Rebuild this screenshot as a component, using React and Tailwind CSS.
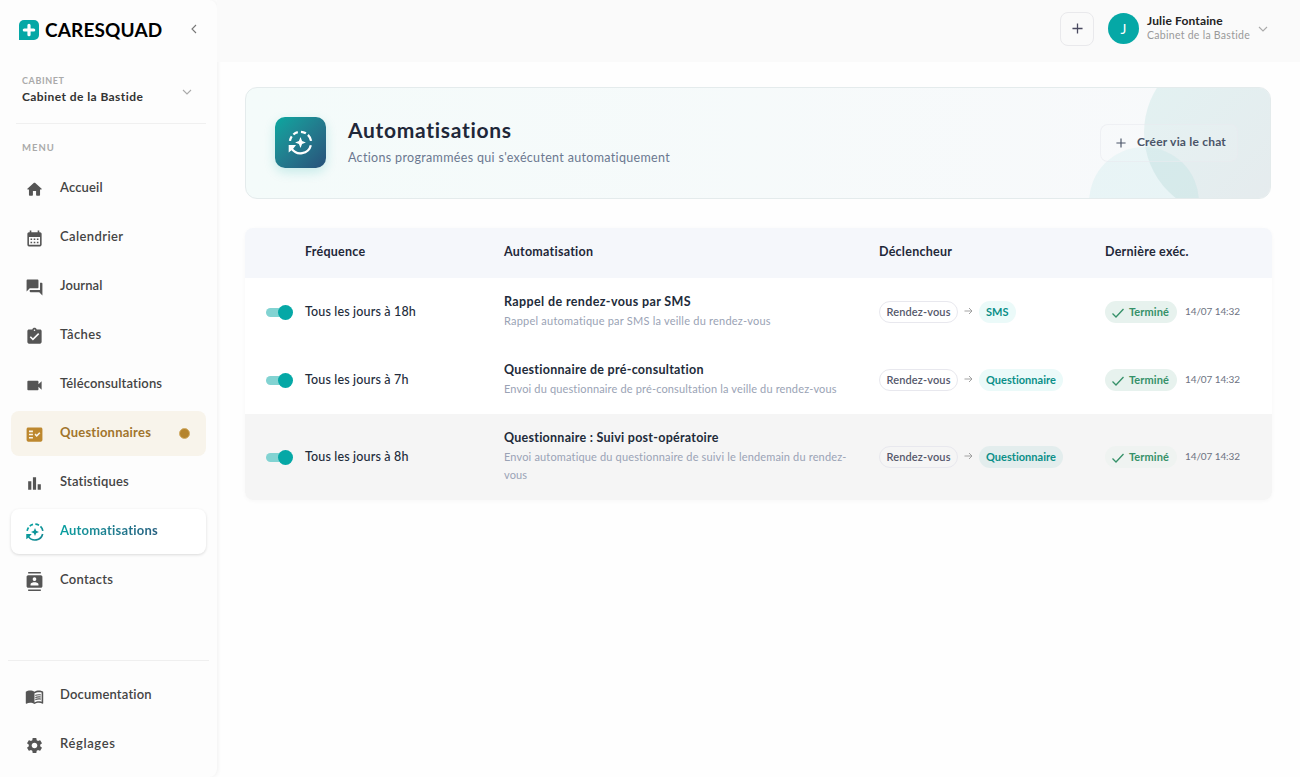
import React from 'react';
import {
  MdCalendarMonth,
  MdQuestionAnswer,
  MdAssignmentTurnedIn,
  MdVideocam,
  MdFactCheck,
  MdBarChart,
  MdContacts,
  MdMenuBook,
  MdSettings,
} from 'react-icons/md';

const HomeIcon = ({ size = 19 }) => (
  <svg width={size} height={size} viewBox="0 0 24 24" fill="currentColor">
    <path d="M10 19v-5h4v5c0 .55.45 1 1 1h3c.55 0 1-.45 1-1v-7h1.7c.46 0 .68-.57.33-.87L12.67 3.6c-.38-.34-.96-.34-1.34 0l-8.36 7.53c-.34.3-.13.87.33.87H5v7c0 .55.45 1 1 1h3c.55 0 1-.45 1-1z" />
  </svg>
);

const AutoIcon = ({ size = 20, stroke = 'currentColor' }) => (
  <svg width={size} height={size} viewBox="0 0 24 24" fill="none">
    <defs>
      <linearGradient id="teal" gradientUnits="userSpaceOnUse" x1="0" y1="0" x2="24" y2="24">
        <stop offset="0" stopColor="#05aaa5" />
        <stop offset="1" stopColor="#17808d" />
      </linearGradient>
    </defs>
    <g stroke={stroke} strokeWidth="2">
      <path d="M21.2 14.4A9.5 9.5 0 0 1 4 17.2" />
      <path d="M2.6 10.6A9.5 9.5 0 0 1 4.2 6.6" />
      <path d="M5.7 4.9A9.5 9.5 0 0 1 9.6 2.8" />
      <path d="M12.4 2.5A9.5 9.5 0 0 1 16.8 3.8" />
      <path d="M18.6 5.2A9.5 9.5 0 0 1 21.4 10.6" />
    </g>
    <path d="M1.5 14.3H8l-2 2.5-2 2L1.5 20.8z" fill={stroke} />
    <path d="M12 7.2l1.4 3.4 3.4 1.4-3.4 1.4L12 16.8l-1.4-3.4L7.2 12l3.4-1.4z" fill={stroke} />
  </svg>
);

const Chevron = ({ className, d = 'M2 4l4 4 4-4' }) => (
  <svg width="12" height="12" viewBox="0 0 12 12" fill="none" stroke="currentColor" className={className}>
    <path d={d} strokeWidth="1.1" />
  </svg>
);

const Plus = ({ size = 12 }) => (
  <svg width={size} height={size} viewBox="0 0 12 12" stroke="currentColor" strokeWidth="1.4">
    <path d="M6 0.5v11M0.5 6h11" />
  </svg>
);

const menu = [
  { label: 'Accueil', icon: HomeIcon, tracking: 'tracking-[0.15px]' },
  { label: 'Calendrier', icon: MdCalendarMonth, tracking: 'tracking-[0.4px]' },
  { label: 'Journal', icon: MdQuestionAnswer, tracking: 'tracking-[0.1px]' },
  { label: 'Tâches', icon: MdAssignmentTurnedIn, tracking: 'tracking-[0.4px]' },
  { label: 'Téléconsultations', icon: MdVideocam, tracking: 'tracking-[0.15px]' },
  { label: 'Questionnaires', icon: MdFactCheck, tracking: 'tracking-[0.23px]', highlight: true },
  { label: 'Statistiques', icon: MdBarChart, tracking: 'tracking-[0.17px]' },
  { label: 'Automatisations', icon: AutoIcon, tracking: 'tracking-[0.2px]', active: true },
  { label: 'Contacts', icon: MdContacts, tracking: 'tracking-[0.25px]' },
];

const footerMenu = [
  { label: 'Documentation', icon: MdMenuBook, tracking: 'tracking-[0.17px]' },
  { label: 'Réglages', icon: MdSettings, tracking: 'tracking-[0.62px]' },
];

const rows = [
  {
    freq: 'Tous les jours à 18h',
    title: 'Rappel de rendez-vous par SMS',
    desc: 'Rappel automatique par SMS la veille du rendez-vous',
    action: 'SMS',
    titleTracking: 'tracking-[0.38px]',
    descTracking: 'tracking-[0.22px]',
  },
  {
    freq: 'Tous les jours à 7h',
    title: 'Questionnaire de pré-consultation',
    desc: 'Envoi du questionnaire de pré-consultation la veille du rendez-vous',
    action: 'Questionnaire',
    titleTracking: 'tracking-[0.28px]',
    descTracking: 'tracking-[0.15px]',
  },
  {
    freq: 'Tous les jours à 8h',
    title: 'Questionnaire : Suivi post-opératoire',
    desc: 'Envoi automatique du questionnaire de suivi le lendemain du rendez-vous',
    action: 'Questionnaire',
    titleTracking: 'tracking-[0.26px]',
    descTracking: 'tracking-[0.16px]',
    hovered: true,
  },
];

const NavItem = ({ item }) => {
  const Icon = item.icon;
  let look = 'text-[#444]';
  if (item.highlight) look = 'bg-[#f8f4eb] text-[#a1752c]';
  if (item.active) look = 'bg-white shadow-[0_1px_3px_rgba(0,0,0,0.14)]';
  return (
    <li className={`flex h-[45px] items-center rounded-lg pl-[13px] pr-[16px] ${look}`}>
      <span className={`flex w-[21px] justify-center pt-px ${item.highlight ? 'text-[#bd882f]' : 'text-[#555]'}`}>
        <Icon size={item.active ? 20 : 19} {...(item.active ? { stroke: 'url(#teal)' } : {})} />
      </span>
      <span
        className={`mb-[3px] ml-[15px] whitespace-nowrap text-[13px] leading-5 ${item.tracking} ${
          item.active || item.highlight ? 'font-bold' : 'font-semibold'
        } ${item.active ? 'bg-gradient-to-r from-[#05a0a0] to-[#245f80] bg-clip-text text-transparent' : ''}`}
      >
        {item.label}
      </span>
      {item.highlight && (
        <span className="ml-auto h-[11px] w-[11px] rounded-full border border-[#d3ae68] bg-[#b5842c]" />
      )}
    </li>
  );
};

const Sidebar = () => (
  <aside className="flex h-full w-[217px] shrink-0 flex-col rounded-r-lg bg-[#fdfdfd] shadow-[1px_0_4px_rgba(0,0,0,0.06)]">
    <div className="flex h-[60px] items-center pl-[19px] pr-[17px]">
      <svg width="20" height="20" viewBox="0 0 20 20">
        <path d="M5 0h10a5 5 0 0 1 5 5v10a5 5 0 0 1-5 5H0V5a5 5 0 0 1 5-5z" fill="#05a8a6" />
        <path d="M10 5.3v9.4M5.3 10h9.4" stroke="#fff" strokeWidth="3.2" strokeLinecap="round" />
      </svg>
      <span className="ml-[6px] text-[19px] font-bold leading-6 tracking-[0.15px] text-black">CARESQUAD</span>
      <Chevron d="M8 2L4 6l4 4" className="mb-[3px] ml-auto text-[#777]" />
    </div>
    <div className="ml-4 mr-[11px] flex h-16 items-center border-b border-[#f0f0f0] pl-[6px] pr-[13px]">
      <div className="pb-[3px]">
        <div className="text-[9px] font-bold leading-[14px] tracking-[0.6px] text-[#aaa]">CABINET</div>
        <div className="text-[12px] font-bold leading-[18px] tracking-[0.42px] text-[#333]">Cabinet de la Bastide</div>
      </div>
      <Chevron className="ml-auto text-[#aaa]" />
    </div>
    <div className="mt-4 pl-[22px] text-[9.5px] font-bold leading-4 tracking-[1px] text-[#aaa]">MENU</div>
    <ul className="mt-[10px] flex flex-col gap-[4px] px-[11px]">
      {menu.map((item) => (
        <NavItem key={item.label} item={item} />
      ))}
    </ul>
    <ul className="mx-2 mt-auto flex flex-col gap-[4px] border-t border-[#efefef] px-[3px] pb-[10px] pt-[12px]">
      {footerMenu.map((item) => (
        <NavItem key={item.label} item={item} />
      ))}
    </ul>
  </aside>
);

const Topbar = () => (
  <header className="flex h-[62px] shrink-0 items-center justify-end bg-[#fafafa] pb-[5px] pr-[31px]">
    <button className="flex h-[34px] w-[34px] items-center justify-center rounded-lg border border-[#e9e9ec] text-[#4a4a60]">
      <Plus size={11} />
    </button>
    <div className="ml-[14px] flex h-[31px] w-[31px] items-center justify-center rounded-full bg-[#05a8a6] text-[14px] text-white">
      J
    </div>
    <div className="mb-px ml-2 w-[103px] whitespace-nowrap">
      <div className="text-[12px] font-bold leading-[14px] tracking-[0.15px] text-[#222]">Julie Fontaine</div>
      <div className="text-[10.5px] leading-[14px] tracking-[0.28px] text-[#999]">Cabinet de la Bastide</div>
    </div>
    <Chevron className="ml-[7px] text-[#aaa]" />
  </header>
);

const Hero = () => (
  <section className="relative flex h-[112px] w-[1026px] items-center overflow-hidden rounded-xl border border-[#e4ebec] bg-gradient-to-r from-[#f4fbfa] to-[#f8f9fb] pl-[29px] pr-8">
    <div className="absolute -top-[39px] left-[898px] h-[167px] w-[167px] rounded-full bg-gradient-to-br from-[#e2f2f2] to-[#e6eaed]" />
    <div className="absolute left-[843px] top-[59px] h-[110px] w-[110px] rounded-full bg-[#05a8a6]/6" />
    <div className="mb-px flex h-[51px] w-[51px] items-center justify-center rounded-[10px] bg-gradient-to-br from-[#05a8a0] to-[#27517a] shadow-[0_4px_12px_rgba(5,168,166,0.2)]">
      <AutoIcon size={27} stroke="#fff" />
    </div>
    <div className="mb-[3px] ml-[22px]">
      <h1 className="text-[21px] font-bold leading-7 tracking-[0.7px] text-[#1f2839]">Automatisations</h1>
      <p className="mt-[4px] text-[12.5px] leading-5 tracking-[0.33px] text-[#6b7890]">
        Actions programmées qui s'exécutent automatiquement
      </p>
    </div>
    <button className="relative ml-auto flex h-[38px] w-[138px] items-center rounded-lg border border-[#e8eaee]/60 bg-white/10 pl-[15px] text-[#4a5468]">
      <Plus size={10} />
      <span className="mb-[2px] ml-[11px] whitespace-nowrap text-[12px] font-bold tracking-[0.2px]">Créer via le chat</span>
    </button>
  </section>
);

const Toggle = () => (
  <span className="relative block h-[15px] w-[27px]">
    <span className="absolute left-0 top-[3px] h-[9px] w-[24px] rounded-full bg-[#82d3d2]" />
    <span className="absolute right-0 top-0 h-[15px] w-[15px] rounded-full bg-[#05a8a6]" />
  </span>
);

const Row = ({ row }) => (
  <div
    className={`grid grid-cols-[60px_199px_375px_226px_1fr] items-center ${row.hovered ? 'h-[86px] bg-[#f5f5f5]' : 'h-[68px] bg-white'}`}
  >
    <div className="pl-[21px] pt-px">
      <Toggle />
    </div>
    <div className="text-[12.5px] font-medium tracking-[0.15px] text-[#222b3a]">{row.freq}</div>
    <div className="mb-[2px] pr-7">
      <div className={`text-[12.5px] font-bold leading-5 text-[#222b3a] ${row.titleTracking}`}>{row.title}</div>
      <div className={`text-[11px] leading-[18px] text-[#9aa3b5] ${row.descTracking}`}>{row.desc}</div>
    </div>
    <div className="flex items-center">
      <span className="flex h-[22px] w-[79px] items-center justify-center rounded-full border border-[#e8e8ee] text-[11px] font-semibold tracking-[0.15px] text-[#55586b]">
        Rendez-vous
      </span>
      <svg width="9" height="8" viewBox="0 0 9 8" fill="none" stroke="#999" strokeWidth="0.9" className="mx-[6px] mb-[3px]">
        <path d="M0.5 4H8M5 1l3 3-3 3" />
      </svg>
      <span
        className={`flex h-[22px] items-center rounded-full px-[7px] text-[11px] font-bold tracking-[0.02px] text-[#0a8f88] ${row.hovered ? 'bg-[#e3eded]' : 'bg-[#ebfaf9]'}`}
      >
        {row.action}
      </span>
    </div>
    <div className="flex items-center">
      <span
        className={`flex h-[22px] w-[72px] items-center rounded-full pl-[7px] text-[11px] font-bold tracking-[0.1px] text-[#369169] ${row.hovered ? 'bg-[#eff3f1]' : 'bg-[#e7f2ee]'}`}
      >
        <svg width="12" height="10" viewBox="0 0 12 10" fill="none" stroke="currentColor" strokeWidth="1.3" className="mr-[5px] mt-[2px]">
          <path d="M0.5 5.5L4 9l7.5-8" />
        </svg>
        Terminé
      </span>
      <span className="mb-[2px] ml-2 text-[10px] tracking-[-0.1px] text-[#6d7282]">14/07 14:32</span>
    </div>
  </div>
);

const App = () => (
  <div className="flex h-[777px] w-[1300px] overflow-hidden bg-[#fefefe] font-['Lato',sans-serif]">
    <Sidebar />
    <div className="flex flex-1 flex-col">
      <Topbar />
      <main className="flex flex-col gap-[29px] px-7 pt-[25px]">
        <Hero />
        <div className="overflow-hidden rounded-lg shadow-[0_1px_4px_rgba(0,0,0,0.03)]">
          <div className="grid h-[50px] grid-cols-[60px_199px_375px_226px_1fr] items-center bg-[#f5f7fb] pb-[2px] text-[12.5px] font-bold tracking-[0.25px] text-[#1f2839]">
            <span />
            <span>Fréquence</span>
            <span>Automatisation</span>
            <span>Déclencheur</span>
            <span>Dernière exéc.</span>
          </div>
          {rows.map((row) => (
            <Row key={row.title} row={row} />
          ))}
        </div>
      </main>
    </div>
  </div>
);

export default App;
